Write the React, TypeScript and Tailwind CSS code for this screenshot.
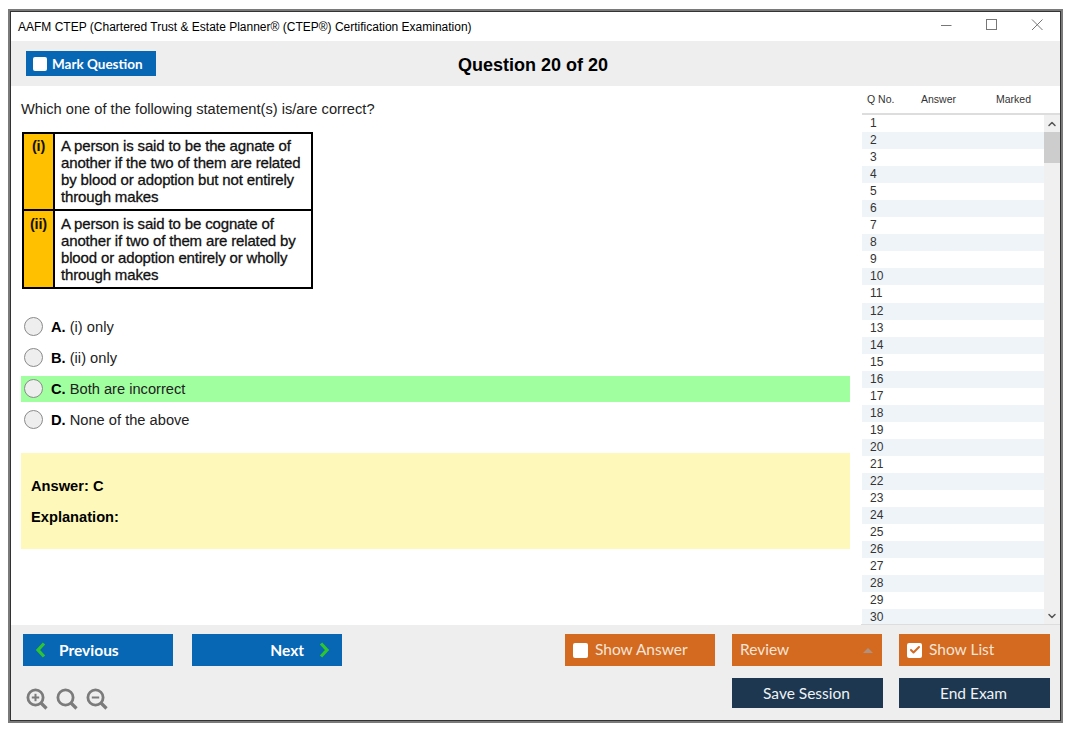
import React from 'react';
import { ChevronUp, ChevronDown, Check } from 'lucide-react';

const options = [
  { key: 'A.', text: '(i) only' },
  { key: 'B.', text: '(ii) only' },
  { key: 'C.', text: 'Both are incorrect', correct: true },
  { key: 'D.', text: 'None of the above' },
];

const rows = Array.from({ length: 30 }, (_, i) => i + 1);

const btn = 'flex items-center text-[15.5px] [font-family:Lato,sans-serif]';

const Chevron = ({ dir }: { dir: 'left' | 'right' }) => (
  <svg width="11" height="16" viewBox="0 0 11 16" fill="none" stroke="#2fc52f" strokeWidth="3.2">
    <path d={dir === 'left' ? 'M9 1.5 L3 8 L9 14.5' : 'M2 1.5 L8 8 L2 14.5'} />
  </svg>
);

const Lens = ({ mark }: { mark?: 'plus' | 'minus' }) => (
  <svg width="22" height="22" viewBox="0 0 22 22" fill="none" stroke="#7b7b7b" strokeWidth="2.8">
    <circle cx="9.5" cy="9.5" r="7.6" />
    <path d="M15 15 L20.5 20.5" strokeWidth="3.2" />
    {mark && <path d="M5.8 9.5 H13.2" strokeWidth="2" />}
    {mark === 'plus' && <path d="M9.5 5.8 V13.2" strokeWidth="2" />}
  </svg>
);

const App: React.FC = () => {
  return (
    <div className="w-[1075px] h-[735px] bg-white pl-2 pt-[9px] [font-family:'Liberation_Sans',Arial,sans-serif] overflow-hidden">
      <div className="w-[1055px] h-[714px] border-2 border-[#7a7a7a]">
        <div className="h-full border border-[#333] flex flex-col bg-white">
          {/* title bar */}
          <div className="h-[29px] pt-px flex items-center justify-between pl-[7px] pr-[17px] shrink-0">
            <span className="text-[12px] text-black">AAFM CTEP (Chartered Trust &amp; Estate Planner® (CTEP®) Certification Examination)</span>
            <svg width="102" height="12" viewBox="0 0 102 12" fill="none" stroke="#777" strokeWidth="1" className="-mt-[5px]">
              <path d="M0 6.5 H10.5" />
              <rect x="45.5" y="0.5" width="10" height="10" />
              <path d="M91 0.5 L101.5 11 M101.5 0.5 L91 11" />
            </svg>
          </div>

          {/* toolbar */}
          <div className="h-[45px] bg-[#eeeeee] relative flex items-center justify-center shrink-0">
            <button className="absolute left-[15px] top-2.5 w-[130px] h-[25px] bg-[#0767b4] text-white text-[13.5px] font-bold flex items-center pl-[7px] gap-[5px] [font-family:Lato,sans-serif]">
              <span className="w-[14px] h-[14px] bg-white rounded-[2px]" />
              <span className="mt-[2px]">Mark Question</span>
            </button>
            <h1 className="text-[18px] font-bold text-black pr-[5px] mt-[4px]">Question 20 of 20</h1>
          </div>

          {/* body */}
          <div className="flex-1 min-h-0 flex">
            <div className="w-[850px] pl-[10px] pr-[11px] shrink-0">
              <p className="text-[14.67px] text-[#222] pt-[15px] leading-[17px]">Which one of the following statement(s) is/are correct?</p>
              <div className="mt-[14px] ml-px w-[291px] h-[157px] border-2 border-black flex flex-col text-[15px] leading-[17px] tracking-[-0.15px] text-[#111] [-webkit-text-stroke:0.3px_#111]">
                <div className="flex h-[77px] border-b-2 border-black">
                  <div className="w-[31px] bg-[#ffc000] border-r-2 border-black font-bold text-center pt-1 shrink-0 text-[14.5px] [-webkit-text-stroke:0]">(i)</div>
                  <div className="pl-[6px] pt-[3px] whitespace-nowrap">A person is said to be the agnate of<br />another if the two of them are related<br />by blood or adoption but not entirely<br />through makes</div>
                </div>
                <div className="flex flex-1">
                  <div className="w-[31px] bg-[#ffc000] border-r-2 border-black font-bold text-center pt-[5px] shrink-0 text-[14.5px] [-webkit-text-stroke:0]">(ii)</div>
                  <div className="pl-[6px] pt-1 whitespace-nowrap">A person is said to be cognate of<br />another if two of them are related by<br />blood or adoption entirely or wholly<br />through makes</div>
                </div>
              </div>
              <div className="mt-[25px] flex flex-col gap-[5px]">
                {options.map((o) => (
                  <div key={o.key} className={`h-[26px] flex items-center pl-[3px] gap-[8px] text-[14.67px] text-[#222] ${o.correct ? 'bg-[#a0ff9f]' : ''}`}>
                    <span className="w-[19px] h-[19px] rounded-full bg-[#eeeeee] border border-[#8a8a8a] -mt-px" />
                    <span><b className="text-black">{o.key}</b> {o.text}</span>
                  </div>
                ))}
              </div>
              <div className="mt-5 h-[96px] bg-[#fff8bb] px-[10px] pt-[23px] text-[14.67px] font-bold text-black leading-[20px] flex flex-col gap-[11px]">
                <div>Answer: C</div>
                <div>Explanation:</div>
              </div>
            </div>

            {/* question list */}
            <div className="flex-1 min-w-0 flex flex-col overflow-hidden border-b border-[#ddd] pl-px">
              <div className="h-[28px] mt-px border-b-2 border-[#ddd] flex items-center text-[10.5px] text-[#333] pl-[5px] shrink-0">
                <span className="w-[54px]">Q No.</span>
                <span className="w-[75px]">Answer</span>
                <span>Marked</span>
              </div>
              <div className="flex-1 min-h-0 flex overflow-hidden">
                <div className="flex-1 overflow-hidden">
                  {rows.map((n) => (
                    <div key={n} className={`h-[17.05px] shrink-0 pl-2 text-[12px] leading-[17px] text-[#333] ${n % 2 === 0 ? 'bg-[#eff4f9]' : 'bg-white'}`}>{n}</div>
                  ))}
                </div>
                <div className="w-[16px] bg-[#f0f0f0] flex flex-col items-center justify-between shrink-0">
                  <div className="w-full">
                    <div className="h-[17px] flex items-center justify-center text-[#555]"><ChevronUp className="w-3 h-3" strokeWidth={3} /></div>
                    <div className="h-[31px] bg-[#cdcdcd]" />
                  </div>
                  <div className="h-[17px] flex items-center justify-center text-[#555]"><ChevronDown className="w-3 h-3" strokeWidth={3} /></div>
                </div>
              </div>
            </div>
          </div>

          {/* footer */}
          <div className="h-[95px] bg-[#eeeeee] shrink-0 flex justify-between pl-3 pr-[10px] pt-[9px]">
            <div className="flex flex-col justify-between pb-[10px]">
              <div className="flex gap-[19px]">
                <button className={`${btn} w-[150px] h-8 bg-[#0767b4] text-white font-bold pl-[12px] gap-[13px]`}>
                  <Chevron dir="left" />
                  <span className="mt-[2px]">Previous</span>
                </button>
                <button className={`${btn} w-[150px] h-8 bg-[#0767b4] text-white font-bold justify-end pr-[12px] gap-[15px]`}>
                  <span className="mt-[2px]">Next</span>
                  <Chevron dir="right" />
                </button>
              </div>
              <div className="flex gap-[8px] ml-[3px]">
                <Lens mark="plus" />
                <Lens />
                <Lens mark="minus" />
              </div>
            </div>
            <div className="flex flex-col gap-3 w-[485px]">
              <div className="flex gap-[17px]">
                <button className={`${btn} w-[150px] h-8 bg-[#d36a1f] text-[#f4e4d8] pl-2 gap-[7px]`}>
                  <span className="w-[15px] h-[15px] bg-white rounded-[2px]" />
                  Show Answer
                </button>
                <button className={`${btn} w-[150px] h-8 bg-[#d36a1f] text-[#f4e4d8] pl-2 justify-between pr-[9px]`}>
                  Review
                  <span className="w-0 h-0 border-x-[5px] border-x-transparent border-b-[5px] border-b-[#b09080]" />
                </button>
                <button className={`${btn} w-[151px] h-8 bg-[#d36a1f] text-[#f4e4d8] pl-2 gap-[7px]`}>
                  <span className="w-[15px] h-[15px] bg-white rounded-[2px] flex items-center justify-center">
                    <Check className="w-3 h-3 text-[#d36a1f]" strokeWidth={4} />
                  </span>
                  Show List
                </button>
              </div>
              <div className="flex gap-4 justify-end">
                <button className={`${btn} w-[151px] h-[30px] bg-[#1c374f] text-[#eef2f5] justify-center pr-[2px] pt-[2px]`}>Save Session</button>
                <button className={`${btn} w-[151px] h-[30px] bg-[#1c374f] text-[#eef2f5] justify-center pr-[2px] pt-[2px]`}>End Exam</button>
              </div>
            </div>
          </div>
        </div>
      </div>
    </div>
  );
};

export default App;
